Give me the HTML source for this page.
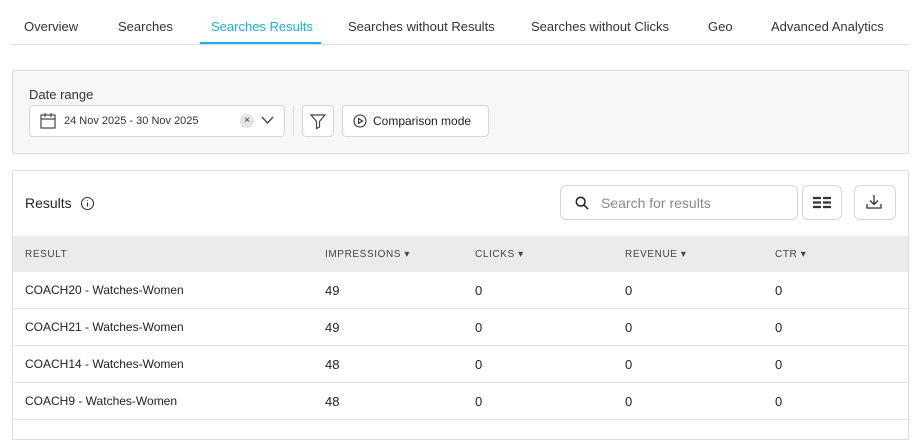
<!DOCTYPE html>
<html><head><meta charset="utf-8"><style>
*{box-sizing:border-box;margin:0;padding:0}
body{width:921px;height:424px;overflow:hidden;background:#fff;font-family:"Liberation Sans",sans-serif;color:#222;position:relative}
.abs{position:absolute}
.tab{position:absolute;top:19px;font-size:13px;color:#333}
.btn{position:absolute;border:1px solid #d6d6d6;border-radius:4px;background:#fff}
.th{position:absolute;top:249px;font-size:10px;letter-spacing:.6px;color:#444}
.td{position:absolute;font-size:12px;color:#222}
.num{position:absolute;font-size:13px;color:#222}
.row{position:absolute;left:13px;width:895px;height:1px;background:#e2e2e2}
</style></head><body>
<div class="tab" style="left:24px">Overview</div>
<div class="tab" style="left:118px">Searches</div>
<div class="tab" style="left:211px;color:#1aaee0">Searches Results</div>
<div class="tab" style="left:348px">Searches without Results</div>
<div class="tab" style="left:531px">Searches without Clicks</div>
<div class="tab" style="left:708px">Geo</div>
<div class="tab" style="left:771px">Advanced Analytics</div>
<div class="abs" style="left:12px;top:44px;width:896px;height:1px;background:#ddd"></div>
<div class="abs" style="left:200px;top:42px;width:121px;height:2px;background:#1aaee0"></div>

<div class="abs" style="left:12px;top:70px;width:897px;height:84px;background:#f7f7f7;border:1px solid #ddd;border-radius:2px"></div>
<div class="abs" style="left:29px;top:87px;font-size:13px;color:#333">Date range</div>
<div class="btn" style="left:29px;top:105px;width:256px;height:32px"></div>
<svg class="abs" style="left:39px;top:112px" width="18" height="18" viewBox="0 0 18 18" fill="none" stroke="#444" stroke-width="1.2"><rect x="2" y="3" width="14" height="13"/><path d="M2 7h14M6 1v4M12 1v4"/></svg>
<div class="abs" style="left:64px;top:115px;font-size:11px;color:#333">24 Nov 2025 - 30 Nov 2025</div>
<div class="abs" style="left:240px;top:114px;width:14px;height:14px;border-radius:50%;background:#e4e4e4;font-size:10px;text-align:center;line-height:14px;color:#333">×</div>
<svg class="abs" style="left:261px;top:116px" width="13" height="9" viewBox="0 0 13 9" fill="none" stroke="#444" stroke-width="1.3"><path d="M1 1l5.5 6L12 1"/></svg>
<div class="abs" style="left:293px;top:106px;width:1px;height:30px;background:#ddd"></div>
<div class="btn" style="left:302px;top:105px;width:32px;height:32px"></div>
<svg class="abs" style="left:309px;top:112px" width="18" height="18" viewBox="0 0 18 18" fill="none" stroke="#444" stroke-width="1.2"><path d="M2 3h14l-5.5 6.5V15l-3 1.5V9.5z"/></svg>
<div class="btn" style="left:342px;top:105px;width:147px;height:32px"></div>
<svg class="abs" style="left:353px;top:114px" width="14" height="14" viewBox="0 0 14 14" fill="none" stroke="#333" stroke-width="1.1"><circle cx="7" cy="7" r="6"/><path d="M5.5 4.5v5l4-2.5z"/></svg>
<div class="abs" style="left:373px;top:114px;font-size:12px;color:#222">Comparison mode</div>

<div class="abs" style="left:12px;top:170px;width:897px;height:270px;border:1px solid #ddd;border-radius:2px"></div>
<div class="abs" style="left:25px;top:195px;font-size:14px;color:#222">Results</div>
<svg class="abs" style="left:80px;top:196px" width="15" height="15" viewBox="0 0 15 15" fill="none" stroke="#333" stroke-width="1.1"><circle cx="7.5" cy="7.5" r="6"/><path d="M7.5 6.5v4M7.5 4.2v.8"/></svg>
<div class="btn" style="left:560px;top:185px;width:238px;height:35px;border-radius:6px"></div>
<svg class="abs" style="left:575px;top:196px" width="14" height="14" viewBox="0 0 16 16" fill="none" stroke="#222" stroke-width="1.8"><circle cx="6.5" cy="6.5" r="5"/><path d="M10.2 10.2L15 15"/></svg>
<div class="abs" style="left:601px;top:195px;font-size:14px;color:#888">Search for results</div>
<div class="btn" style="left:802px;top:185px;width:40px;height:35px;border-radius:6px"></div>
<svg class="abs" style="left:812px;top:196px" width="20" height="14" viewBox="0 0 20 14" stroke="#333" stroke-width="2.2"><path d="M1 2h8M11 2h8M1 6.5h8M11 6.5h8M1 11h8M11 11h8"/></svg>
<div class="btn" style="left:854px;top:185px;width:42px;height:35px;border-radius:6px"></div>
<svg class="abs" style="left:865px;top:194px" width="18" height="16" viewBox="0 0 18 16" fill="none" stroke="#333" stroke-width="1.3"><path d="M9 1v9M5 6.5l4 4 4-4M2 10v4h14v-4"/></svg>

<div class="abs" style="left:13px;top:236px;width:895px;height:36px;background:#ebebeb"></div>
<div class="th" style="left:25px">RESULT</div>
<div class="th" style="left:325px">IMPRESSIONS ▾</div>
<div class="th" style="left:475px">CLICKS ▾</div>
<div class="th" style="left:625px">REVENUE ▾</div>
<div class="th" style="left:775px">CTR ▾</div>

<div class="td" style="left:25px;top:283px">COACH20 - Watches-Women</div>
<div class="num" style="left:325px;top:283px">49</div><div class="num" style="left:475px;top:283px">0</div><div class="num" style="left:625px;top:283px">0</div><div class="num" style="left:775px;top:283px">0</div>
<div class="row" style="top:308px"></div>
<div class="td" style="left:25px;top:320px">COACH21 - Watches-Women</div>
<div class="num" style="left:325px;top:320px">49</div><div class="num" style="left:475px;top:320px">0</div><div class="num" style="left:625px;top:320px">0</div><div class="num" style="left:775px;top:320px">0</div>
<div class="row" style="top:345px"></div>
<div class="td" style="left:25px;top:357px">COACH14 - Watches-Women</div>
<div class="num" style="left:325px;top:357px">48</div><div class="num" style="left:475px;top:357px">0</div><div class="num" style="left:625px;top:357px">0</div><div class="num" style="left:775px;top:357px">0</div>
<div class="row" style="top:382px"></div>
<div class="td" style="left:25px;top:394px">COACH9 - Watches-Women</div>
<div class="num" style="left:325px;top:394px">48</div><div class="num" style="left:475px;top:394px">0</div><div class="num" style="left:625px;top:394px">0</div><div class="num" style="left:775px;top:394px">0</div>
<div class="row" style="top:419px"></div>
</body></html>
